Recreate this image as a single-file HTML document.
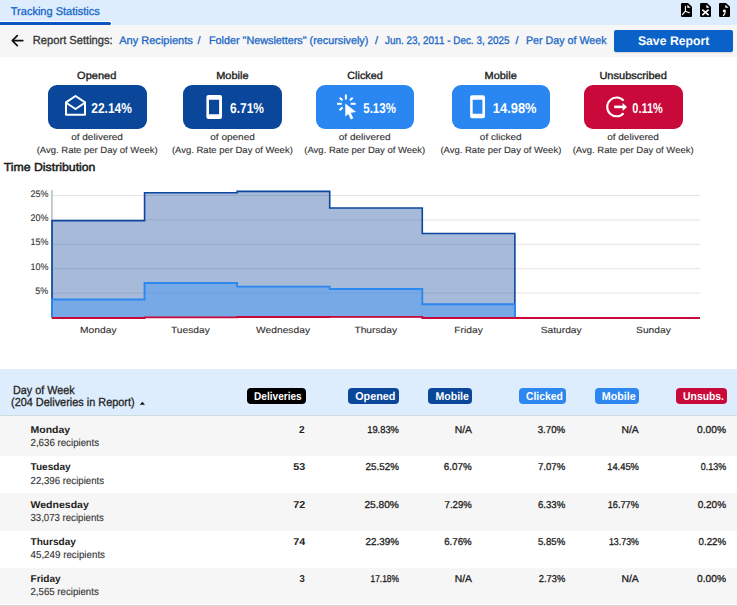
<!DOCTYPE html>
<html><head><meta charset="utf-8"><style>
html,body{margin:0;padding:0;}
body{width:737px;height:606px;position:relative;overflow:hidden;background:#fff;font-family:"Liberation Sans",sans-serif;}
.tx{position:absolute;left:0;top:0;}
.card{position:absolute;top:84.6px;width:98.6px;height:44.9px;border-radius:9px;}
.badge{position:absolute;top:387.5px;height:16.8px;border-radius:4px;}
</style></head><body>
<div style="position:absolute;left:0;top:0;width:737px;height:24.5px;background:#deedfd"></div>
<div style="position:absolute;left:0;top:20.8px;width:111.5px;height:4.6px;background:#fff"></div>
<div style="position:absolute;left:0;top:22.2px;width:111.3px;height:2.6px;background:#0d55c0;border-radius:0 2px 2px 0"></div>
<div style="position:absolute;left:0;top:24.5px;width:737px;height:32px;background:#f6f6f6"></div>
<div style="position:absolute;left:614.2px;top:29.6px;width:118.8px;height:22.7px;background:#0a62c9;border-radius:2px;box-shadow:0 1px 1px rgba(0,0,0,.15)"></div>
<div class="card" style="left:48px;background:#0a469a"></div><div class="card" style="left:183.2px;background:#0a469a"></div><div class="card" style="left:315.6px;background:#2a87f2"></div><div class="card" style="left:451.7px;background:#2a87f2"></div><div class="card" style="left:584px;background:#c9093a"></div>
<svg width="737" height="606" style="position:absolute;left:0;top:0">
<rect x="52" y="195.00" width="648" height="1" fill="#e4e4e4"/>
<rect x="52" y="219.40" width="648" height="1" fill="#e4e4e4"/>
<rect x="52" y="243.80" width="648" height="1" fill="#e4e4e4"/>
<rect x="52" y="268.20" width="648" height="1" fill="#e4e4e4"/>
<rect x="52" y="292.60" width="648" height="1" fill="#e4e4e4"/>
<rect x="51.1" y="190" width="1.6" height="128" fill="#bdbdbd"/>
<path d="M52.00 220.58 L144.57 220.58 L144.57 192.76 L237.14 192.76 L237.14 191.39 L329.71 191.39 L329.71 208.06 L422.29 208.06 L422.29 233.54 L514.86 233.54 L514.86 317.55 L52.0 317.55 Z" fill="#0a3f95" fill-opacity="0.36"/>
<path d="M52.00 299.46 L144.57 299.46 L144.57 282.98 L237.14 282.98 L237.14 286.60 L329.71 286.60 L329.71 288.94 L422.29 288.94 L422.29 304.20 L514.86 304.20 L514.86 317.55 L52.0 317.55 Z" fill="#4296f6" fill-opacity="0.47"/>
<path d="M52.0 317.55 L52.00 220.58 L144.57 220.58 L144.57 192.76 L237.14 192.76 L237.14 191.39 L329.71 191.39 L329.71 208.06 L422.29 208.06 L422.29 233.54 L514.86 233.54 L514.86 317.55" fill="none" stroke="#0b46a0" stroke-width="1.6"/>
<path d="M52.0 317.55 L52.00 299.46 L144.57 299.46 L144.57 282.98 L237.14 282.98 L237.14 286.60 L329.71 286.60 L329.71 288.94 L422.29 288.94 L422.29 304.20 L514.86 304.20 L514.86 317.55" fill="none" stroke="#2e87ee" stroke-width="1.9"/>
<path d="M52.00 317.55 L144.57 317.55 L144.57 316.91 L237.14 316.91 L237.14 316.57 L329.71 316.57 L329.71 316.47 L422.29 316.47 L422.29 317.55 L514.86 317.55 L514.86 317.55 L607.43 317.55 L607.43 317.55 L700.00 317.55" fill="none" stroke="#c9093a" stroke-width="1.9" transform="translate(0,0.45)"/>
</svg>
<div style="position:absolute;left:0;top:368.7px;width:737px;height:46px;background:#deedfd"></div>
<div style="position:absolute;left:0;top:414.6px;width:737px;height:1.4px;background:#d3d9e0"></div>
<div style="position:absolute;left:0;top:416px;width:737px;height:40px;background:#f6f6f6"></div>
<div style="position:absolute;left:0;top:493px;width:737px;height:37.5px;background:#f6f6f6"></div>
<div style="position:absolute;left:0;top:567.7px;width:737px;height:36.8px;background:#f6f6f6"></div>
<div style="position:absolute;left:0;top:604.5px;width:737px;height:1.5px;background:#d8d8d8"></div>
<div class="badge" style="left:247px;width:58.5px;background:#000"></div><div class="badge" style="left:348px;width:50.7px;background:#0a469a"></div><div class="badge" style="left:427.8px;width:44.3px;background:#0a469a"></div><div class="badge" style="left:519.2px;width:46.9px;background:#2e87ee"></div><div class="badge" style="left:594.7px;width:44.0px;background:#2e87ee"></div><div class="badge" style="left:676.2px;width:50.4px;background:#c9093a"></div>

<svg style="position:absolute;left:0;top:0" width="737" height="606">
 <!-- arrow back -->
 <path d="M22.8 40.6 H12.5 M17.3 35.6 L12.3 40.6 L17.3 45.6" fill="none" stroke="#111" stroke-width="1.7" stroke-linecap="round" stroke-linejoin="round"/>
 <!-- envelope -->
 <path d="M66 102.3 L75.5 96 L85 102.3 V114.7 H66 Z" fill="none" stroke="#fff" stroke-width="2" stroke-linejoin="round"/>
 <path d="M66.5 103 L75.5 109 L84.5 103" fill="none" stroke="#fff" stroke-width="2" stroke-linejoin="round"/>
 <!-- phone 1 -->
 <path fill="#fff" fill-rule="evenodd" d="M208.4 94.9 H220 A2 2 0 0 1 222 96.9 V116.9 A2 2 0 0 1 220 118.9 H208.4 A2 2 0 0 1 206.4 116.9 V96.9 A2 2 0 0 1 208.4 94.9 Z M209 99.8 V114.3 H219.1 V99.8 Z"/>
 <!-- phone 2 -->
 <path fill="#fff" fill-rule="evenodd" d="M472.1 95.2 H483 A2 2 0 0 1 485 97.2 V116.2 A2 2 0 0 1 483 118.2 H472.1 A2 2 0 0 1 470.1 116.2 V97.2 A2 2 0 0 1 472.1 95.2 Z M472.7 99.8 V113.8 H482.4 V99.8 Z"/>
 <!-- click -->
 <g stroke="#fff" stroke-width="2" stroke-linecap="butt" fill="none">
  <path d="M345.9 94.5 V99.5"/>
  <path d="M337 103.8 H341.7"/>
  <path d="M350.7 103.8 H355.7"/>
  <path d="M339.6 97.7 L342.5 100.2"/>
  <path d="M349.9 100.2 L352.7 97.8"/>
  <path d="M339.6 110.2 L342.5 107.6"/>
 </g>
 <path fill="#fff" d="M345.3 103.6 L345.3 116.6 L348.3 113.9 L350.9 119.4 L353.3 118.2 L350.8 112.7 L356.1 111.9 Z"/>
 <!-- unsub -->
 <path d="M623.6 100.6 A9.4 9.4 0 1 0 623.6 113.2" fill="none" stroke="#fff" stroke-width="2.1"/>
 <path d="M614.1 106.9 H623.5" stroke="#fff" stroke-width="2.6"/>
 <path fill="#fff" d="M622.6 102.9 L627 106.9 L622.6 110.9 Z"/>
 <!-- table sort caret -->
 <path fill="#111" d="M139.8 404.7 L142.4 401.7 L145 404.7 Z"/>
</svg>
<svg style="position:absolute;left:680.8px;top:2.9px" width="11.2" height="14" viewBox="0 0 11.2 14"><path d="M1.2 0 H7 L11.2 4 V12.8 A1.2 1.2 0 0 1 10 14 H1.2 A1.2 1.2 0 0 1 0 12.8 V1.2 A1.2 1.2 0 0 1 1.2 0 Z" fill="#000"/><path d="M6.3 1.7 V4.8 H9.6 Z" fill="#fff"/></svg><svg style="position:absolute;left:699.5px;top:2.9px" width="11.2" height="14" viewBox="0 0 11.2 14"><path d="M1.2 0 H7 L11.2 4 V12.8 A1.2 1.2 0 0 1 10 14 H1.2 A1.2 1.2 0 0 1 0 12.8 V1.2 A1.2 1.2 0 0 1 1.2 0 Z" fill="#000"/><path d="M6.3 1.7 V4.8 H9.6 Z" fill="#fff"/></svg><svg style="position:absolute;left:718.9px;top:2.9px" width="11.2" height="14" viewBox="0 0 11.2 14"><path d="M1.2 0 H7 L11.2 4 V12.8 A1.2 1.2 0 0 1 10 14 H1.2 A1.2 1.2 0 0 1 0 12.8 V1.2 A1.2 1.2 0 0 1 1.2 0 Z" fill="#000"/><path d="M6.3 1.7 V4.8 H9.6 Z" fill="#fff"/></svg>

<svg style="position:absolute;left:0;top:0" width="737" height="30">
 <g stroke="#fff" stroke-width="1.1" fill="none" stroke-linecap="round">
  <path d="M685.4 6.3 V11.2 L682.4 14.6 M685.4 11.2 L689.4 12.7"/>
 </g>
 <path d="M702.3 9.7 L708.6 15.1 M708.6 9.7 L702.3 15.1" stroke="#fff" stroke-width="1.7" fill="none"/>
 <circle cx="724.2" cy="10.9" r="1.35" fill="#fff"/>
 <path d="M725.2 10.9 Q725.4 14 723.3 15.7" stroke="#fff" stroke-width="1.1" fill="none" stroke-linecap="round"/>
</svg>
<svg class="tx" width="737" height="606" font-family="Liberation Sans" text-rendering="geometricPrecision" xml:space="preserve">
<text transform="translate(10.80,15) scale(0.9802,1)" font-size="11.24" fill="#1565c8" stroke="#1565c8" stroke-width="0.3">Tracking Statistics</text>
<text transform="translate(32.80,44) scale(0.9542,1)" font-size="11.68" fill="#333" stroke="#333" stroke-width="0.3">Report Settings:</text>
<text transform="translate(119.20,44) scale(1.0082,1)" font-size="10.95" fill="#1a68c8" stroke="#1a68c8" stroke-width="0.3">Any Recipients</text>
<text transform="translate(197.50,44) scale(1.0000,1)" font-size="10.95" fill="#1a68c8" stroke="#1a68c8" stroke-width="0.3">/</text>
<text transform="translate(209.00,44) scale(0.9864,1)" font-size="10.95" fill="#1a68c8" stroke="#1a68c8" stroke-width="0.3">Folder &quot;Newsletters&quot; (recursively)</text>
<text transform="translate(375.00,44) scale(1.0000,1)" font-size="10.95" fill="#1a68c8" stroke="#1a68c8" stroke-width="0.3">/</text>
<text transform="translate(385.00,44) scale(0.9073,1)" font-size="10.95" fill="#1a68c8" stroke="#1a68c8" stroke-width="0.3">Jun. 23, 2011 - Dec. 3, 2025</text>
<text transform="translate(515.60,44) scale(1.0000,1)" font-size="10.95" fill="#1a68c8" stroke="#1a68c8" stroke-width="0.3">/</text>
<text transform="translate(526.00,44) scale(0.9759,1)" font-size="10.95" fill="#1a68c8" stroke="#1a68c8" stroke-width="0.3">Per Day of Week</text>
<text transform="translate(637.90,45) scale(0.9753,1)" font-size="12.55" font-weight="700" fill="#fff">Save Report</text>
<text transform="translate(77.10,79) scale(1.0649,1)" font-size="10.36" fill="#1e1e1e" stroke="#1e1e1e" stroke-width="0.35">Opened</text>
<text transform="translate(91.30,113) scale(0.8375,1)" font-size="14.31" font-weight="700" fill="#fff">22.14%</text>
<text transform="translate(71.15,140) scale(1.1128,1)" font-size="9" fill="#333" stroke="#333" stroke-width="0.12">of delivered</text>
<text transform="translate(36.70,153) scale(1.0539,1)" font-size="9" fill="#333" stroke="#333" stroke-width="0.12">(Avg. Rate per Day of Week)</text>
<text transform="translate(216.20,79) scale(1.0581,1)" font-size="10.36" fill="#1e1e1e" stroke="#1e1e1e" stroke-width="0.35">Mobile</text>
<text transform="translate(230.00,113) scale(0.8375,1)" font-size="14.31" font-weight="700" fill="#fff">6.71%</text>
<text transform="translate(210.24,140) scale(1.1128,1)" font-size="9" fill="#333" stroke="#333" stroke-width="0.12">of opened</text>
<text transform="translate(171.90,153) scale(1.0539,1)" font-size="9" fill="#333" stroke="#333" stroke-width="0.12">(Avg. Rate per Day of Week)</text>
<text transform="translate(347.30,79) scale(1.0441,1)" font-size="10.36" fill="#1e1e1e" stroke="#1e1e1e" stroke-width="0.35">Clicked</text>
<text transform="translate(363.30,113) scale(0.8025,1)" font-size="14.31" font-weight="700" fill="#fff">5.13%</text>
<text transform="translate(338.75,140) scale(1.1128,1)" font-size="9" fill="#333" stroke="#333" stroke-width="0.12">of delivered</text>
<text transform="translate(304.30,153) scale(1.0539,1)" font-size="9" fill="#333" stroke="#333" stroke-width="0.12">(Avg. Rate per Day of Week)</text>
<text transform="translate(484.50,79) scale(1.0581,1)" font-size="10.36" fill="#1e1e1e" stroke="#1e1e1e" stroke-width="0.35">Mobile</text>
<text transform="translate(492.80,113) scale(0.9021,1)" font-size="14.31" font-weight="700" fill="#fff">14.98%</text>
<text transform="translate(479.86,140) scale(1.1128,1)" font-size="9" fill="#333" stroke="#333" stroke-width="0.12">of clicked</text>
<text transform="translate(440.40,153) scale(1.0539,1)" font-size="9" fill="#333" stroke="#333" stroke-width="0.12">(Avg. Rate per Day of Week)</text>
<text transform="translate(599.40,79) scale(1.0641,1)" font-size="10.36" fill="#1e1e1e" stroke="#1e1e1e" stroke-width="0.35">Unsubscribed</text>
<text transform="translate(632.30,113) scale(0.7675,1)" font-size="14.31" font-weight="700" fill="#fff">0.11%</text>
<text transform="translate(607.15,140) scale(1.1128,1)" font-size="9" fill="#333" stroke="#333" stroke-width="0.12">of delivered</text>
<text transform="translate(572.70,153) scale(1.0539,1)" font-size="9" fill="#333" stroke="#333" stroke-width="0.12">(Avg. Rate per Day of Week)</text>
<text transform="translate(3.70,171) scale(1.0674,1)" font-size="11.53" fill="#1e1e1e" stroke="#1e1e1e" stroke-width="0.5">Time Distribution</text>
<text transform="translate(30.60,197) scale(0.9421,1)" font-size="9.5" fill="#333" stroke="#333" stroke-width="0.1">25%</text>
<text transform="translate(30.60,221) scale(0.9421,1)" font-size="9.5" fill="#333" stroke="#333" stroke-width="0.1">20%</text>
<text transform="translate(30.60,245) scale(0.9421,1)" font-size="9.5" fill="#333" stroke="#333" stroke-width="0.1">15%</text>
<text transform="translate(30.60,270) scale(0.9421,1)" font-size="9.5" fill="#333" stroke="#333" stroke-width="0.1">10%</text>
<text transform="translate(35.31,294) scale(0.9421,1)" font-size="9.5" fill="#333" stroke="#333" stroke-width="0.1">5%</text>
<text transform="translate(80.08,333) scale(1.1375,1)" font-size="9" fill="#333" stroke="#333" stroke-width="0.12">Monday</text>
<text transform="translate(170.95,333) scale(1.1375,1)" font-size="9" fill="#333" stroke="#333" stroke-width="0.12">Tuesday</text>
<text transform="translate(256.12,333) scale(1.1375,1)" font-size="9" fill="#333" stroke="#333" stroke-width="0.12">Wednesday</text>
<text transform="translate(354.38,333) scale(1.1375,1)" font-size="9" fill="#333" stroke="#333" stroke-width="0.12">Thursday</text>
<text transform="translate(454.35,333) scale(1.1375,1)" font-size="9" fill="#333" stroke="#333" stroke-width="0.12">Friday</text>
<text transform="translate(540.66,333) scale(1.1375,1)" font-size="9" fill="#333" stroke="#333" stroke-width="0.12">Saturday</text>
<text transform="translate(636.07,333) scale(1.1375,1)" font-size="9" fill="#333" stroke="#333" stroke-width="0.12">Sunday</text>
<text transform="translate(13.00,394) scale(0.9254,1)" font-size="11.68" fill="#1e1e1e" stroke="#1e1e1e" stroke-width="0.3">Day of Week</text>
<text transform="translate(11.00,406) scale(0.9341,1)" font-size="11.68" fill="#1e1e1e" stroke="#1e1e1e" stroke-width="0.3">(204 Deliveries in Report)</text>
<text transform="translate(30.50,433) scale(1.0500,1)" font-size="10" font-weight="700" fill="#1e1e1e">Monday</text>
<text transform="translate(30.50,446) scale(0.9528,1)" font-size="10.2" fill="#333" stroke="#333" stroke-width="0.12">2,636 recipients</text>
<text transform="translate(299.00,433) scale(1.0167,1)" font-size="10" font-weight="700" fill="#1e1e1e">2</text>
<text transform="translate(367.20,433) scale(0.9353,1)" font-size="10" fill="#1e1e1e" stroke="#1e1e1e" stroke-width="0.3">19.83%</text>
<text transform="translate(454.70,433) scale(1.0353,1)" font-size="10" fill="#1e1e1e" stroke="#1e1e1e" stroke-width="0.3">N/A</text>
<text transform="translate(537.70,433) scale(0.9690,1)" font-size="10" fill="#1e1e1e" stroke="#1e1e1e" stroke-width="0.3">3.70%</text>
<text transform="translate(621.40,433) scale(1.0353,1)" font-size="10" fill="#1e1e1e" stroke="#1e1e1e" stroke-width="0.3">N/A</text>
<text transform="translate(697.10,433) scale(1.0207,1)" font-size="10" fill="#1e1e1e" stroke="#1e1e1e" stroke-width="0.3">0.00%</text>
<text transform="translate(30.50,470) scale(1.0075,1)" font-size="10" font-weight="700" fill="#1e1e1e">Tuesday</text>
<text transform="translate(30.50,484) scale(0.9487,1)" font-size="10.2" fill="#333" stroke="#333" stroke-width="0.12">22,396 recipients</text>
<text transform="translate(293.30,470) scale(1.0727,1)" font-size="10" font-weight="700" fill="#1e1e1e">53</text>
<text transform="translate(365.60,470) scale(0.9824,1)" font-size="10" fill="#1e1e1e" stroke="#1e1e1e" stroke-width="0.3">25.52%</text>
<text transform="translate(443.80,470) scale(0.9828,1)" font-size="10" fill="#1e1e1e" stroke="#1e1e1e" stroke-width="0.3">6.07%</text>
<text transform="translate(538.00,470) scale(0.9586,1)" font-size="10" fill="#1e1e1e" stroke="#1e1e1e" stroke-width="0.3">7.07%</text>
<text transform="translate(607.20,470) scale(0.9353,1)" font-size="10" fill="#1e1e1e" stroke="#1e1e1e" stroke-width="0.3">14.45%</text>
<text transform="translate(700.70,470) scale(0.8966,1)" font-size="10" fill="#1e1e1e" stroke="#1e1e1e" stroke-width="0.3">0.13%</text>
<text transform="translate(30.50,508) scale(1.0527,1)" font-size="10" font-weight="700" fill="#1e1e1e">Wednesday</text>
<text transform="translate(30.50,521) scale(0.9436,1)" font-size="10.2" fill="#333" stroke="#333" stroke-width="0.12">33,073 recipients</text>
<text transform="translate(293.30,508) scale(1.0727,1)" font-size="10" font-weight="700" fill="#1e1e1e">72</text>
<text transform="translate(364.40,508) scale(1.0176,1)" font-size="10" fill="#1e1e1e" stroke="#1e1e1e" stroke-width="0.3">25.80%</text>
<text transform="translate(444.60,508) scale(0.9552,1)" font-size="10" fill="#1e1e1e" stroke="#1e1e1e" stroke-width="0.3">7.29%</text>
<text transform="translate(538.00,508) scale(0.9586,1)" font-size="10" fill="#1e1e1e" stroke="#1e1e1e" stroke-width="0.3">6.33%</text>
<text transform="translate(607.70,508) scale(0.9206,1)" font-size="10" fill="#1e1e1e" stroke="#1e1e1e" stroke-width="0.3">16.77%</text>
<text transform="translate(697.70,508) scale(1.0000,1)" font-size="10" fill="#1e1e1e" stroke="#1e1e1e" stroke-width="0.3">0.20%</text>
<text transform="translate(30.50,545) scale(1.0089,1)" font-size="10" font-weight="700" fill="#1e1e1e">Thursday</text>
<text transform="translate(30.50,558) scale(0.9603,1)" font-size="10.2" fill="#333" stroke="#333" stroke-width="0.12">45,249 recipients</text>
<text transform="translate(293.30,545) scale(1.0727,1)" font-size="10" font-weight="700" fill="#1e1e1e">74</text>
<text transform="translate(365.60,545) scale(0.9824,1)" font-size="10" fill="#1e1e1e" stroke="#1e1e1e" stroke-width="0.3">22.39%</text>
<text transform="translate(444.20,545) scale(0.9690,1)" font-size="10" fill="#1e1e1e" stroke="#1e1e1e" stroke-width="0.3">6.76%</text>
<text transform="translate(538.00,545) scale(0.9586,1)" font-size="10" fill="#1e1e1e" stroke="#1e1e1e" stroke-width="0.3">5.85%</text>
<text transform="translate(608.90,545) scale(0.8853,1)" font-size="10" fill="#1e1e1e" stroke="#1e1e1e" stroke-width="0.3">13.73%</text>
<text transform="translate(698.60,545) scale(0.9690,1)" font-size="10" fill="#1e1e1e" stroke="#1e1e1e" stroke-width="0.3">0.22%</text>
<text transform="translate(30.50,582) scale(1.0067,1)" font-size="10" font-weight="700" fill="#1e1e1e">Friday</text>
<text transform="translate(30.50,595) scale(0.9486,1)" font-size="10.2" fill="#333" stroke="#333" stroke-width="0.12">2,565 recipients</text>
<text transform="translate(299.40,582) scale(0.9500,1)" font-size="10" font-weight="700" fill="#1e1e1e">3</text>
<text transform="translate(370.50,582) scale(0.8382,1)" font-size="10" fill="#1e1e1e" stroke="#1e1e1e" stroke-width="0.3">17.18%</text>
<text transform="translate(454.70,582) scale(1.0353,1)" font-size="10" fill="#1e1e1e" stroke="#1e1e1e" stroke-width="0.3">N/A</text>
<text transform="translate(538.80,582) scale(0.9310,1)" font-size="10" fill="#1e1e1e" stroke="#1e1e1e" stroke-width="0.3">2.73%</text>
<text transform="translate(621.40,582) scale(1.0353,1)" font-size="10" fill="#1e1e1e" stroke="#1e1e1e" stroke-width="0.3">N/A</text>
<text transform="translate(697.10,582) scale(1.0207,1)" font-size="10" fill="#1e1e1e" stroke="#1e1e1e" stroke-width="0.3">0.00%</text>
<text transform="translate(254.10,400) scale(0.8852,1)" font-size="11.39" font-weight="700" fill="#fff">Deliveries</text>
<text transform="translate(355.20,400) scale(0.9500,1)" font-size="11.39" font-weight="700" fill="#fff">Opened</text>
<text transform="translate(435.40,400) scale(0.9306,1)" font-size="11.39" font-weight="700" fill="#fff">Mobile</text>
<text transform="translate(526.00,400) scale(0.9100,1)" font-size="11.39" font-weight="700" fill="#fff">Clicked</text>
<text transform="translate(601.80,400) scale(0.9417,1)" font-size="11.39" font-weight="700" fill="#fff">Mobile</text>
<text transform="translate(683.10,400) scale(0.9091,1)" font-size="11.39" font-weight="700" fill="#fff">Unsubs.</text>
</svg>
</body></html>
